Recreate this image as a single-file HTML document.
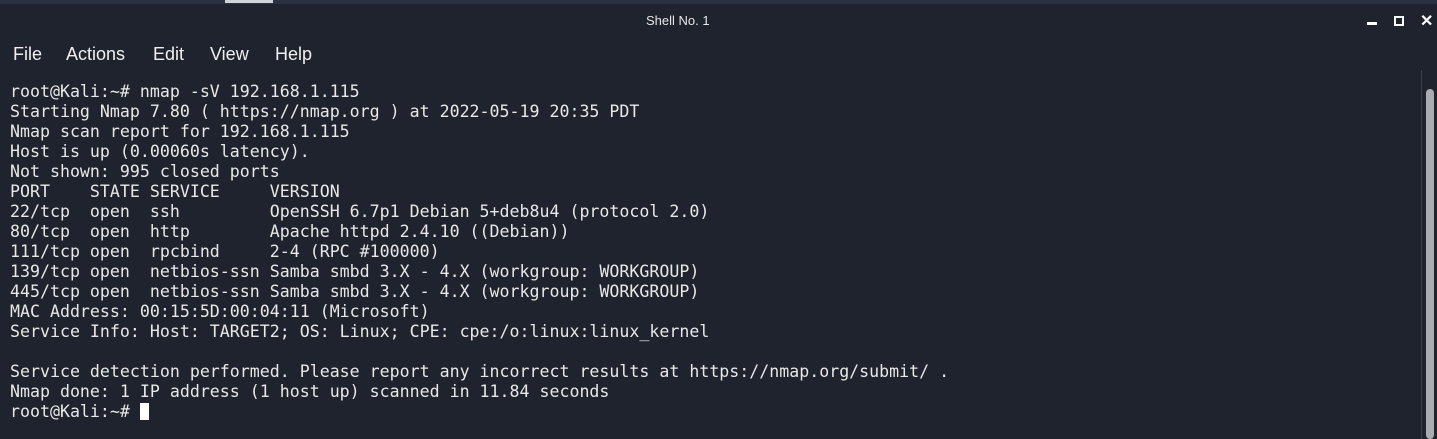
<!DOCTYPE html>
<html><head><style>
body{margin:0;width:1437px;height:439px;background:#1f232d;overflow:hidden;position:relative;font-family:"Liberation Sans",sans-serif}
.top{position:absolute;left:0;top:0;width:1437px;height:4px;background:#2a3140}
.tab{position:absolute;left:225px;top:0;width:48px;height:3px;background:#cfd3da}
.title{position:absolute;top:13px;left:646px;color:#e6e6e6;font-size:13px}
.menu span{position:absolute;top:44px;color:#f0f0f0;font-size:18px}
pre{position:absolute;left:10px;top:82px;margin:0;font-family:"DejaVu Sans Mono","Liberation Mono",monospace;font-size:16.6px;line-height:20px;color:#e8e8e8}
.cur{display:inline-block;width:9px;height:17px;background:#fff;vertical-align:-3px}
.track{position:absolute;left:1421px;top:70px;width:1px;height:369px;background:#3a404c}
.thumb{position:absolute;left:1426px;top:89px;width:8px;height:350px;background:#a9adb3;border-radius:4px}
.wc{position:absolute;top:14px;color:#fff;font-weight:bold;font-size:14px}
</style></head><body>
<div class="top"></div><div class="tab"></div>
<div class="title">Shell No. 1</div>
<div class="wc" style="left:1367px;top:22px;width:10px;height:3px;background:#fff"></div>
<div class="wc" style="left:1394px;top:16px;width:6px;height:6px;border:2px solid #fff"></div>
<div class="wc" style="left:1420px;top:11px;font-size:16px">✕</div>
<div class="menu"><span style="left:13px">File</span><span style="left:66px">Actions</span><span style="left:153px">Edit</span><span style="left:210px">View</span><span style="left:275px">Help</span></div>
<pre>root@Kali:~# nmap -sV 192.168.1.115
Starting Nmap 7.80 ( https://nmap.org ) at 2022-05-19 20:35 PDT
Nmap scan report for 192.168.1.115
Host is up (0.00060s latency).
Not shown: 995 closed ports
PORT    STATE SERVICE     VERSION
22/tcp  open  ssh         OpenSSH 6.7p1 Debian 5+deb8u4 (protocol 2.0)
80/tcp  open  http        Apache httpd 2.4.10 ((Debian))
111/tcp open  rpcbind     2-4 (RPC #100000)
139/tcp open  netbios-ssn Samba smbd 3.X - 4.X (workgroup: WORKGROUP)
445/tcp open  netbios-ssn Samba smbd 3.X - 4.X (workgroup: WORKGROUP)
MAC Address: 00:15:5D:00:04:11 (Microsoft)
Service Info: Host: TARGET2; OS: Linux; CPE: cpe:/o:linux:linux_kernel

Service detection performed. Please report any incorrect results at https://nmap.org/submit/ .
Nmap done: 1 IP address (1 host up) scanned in 11.84 seconds
root@Kali:~# <span class="cur"></span></pre>
<div class="track"></div><div class="thumb"></div>
</body></html>
